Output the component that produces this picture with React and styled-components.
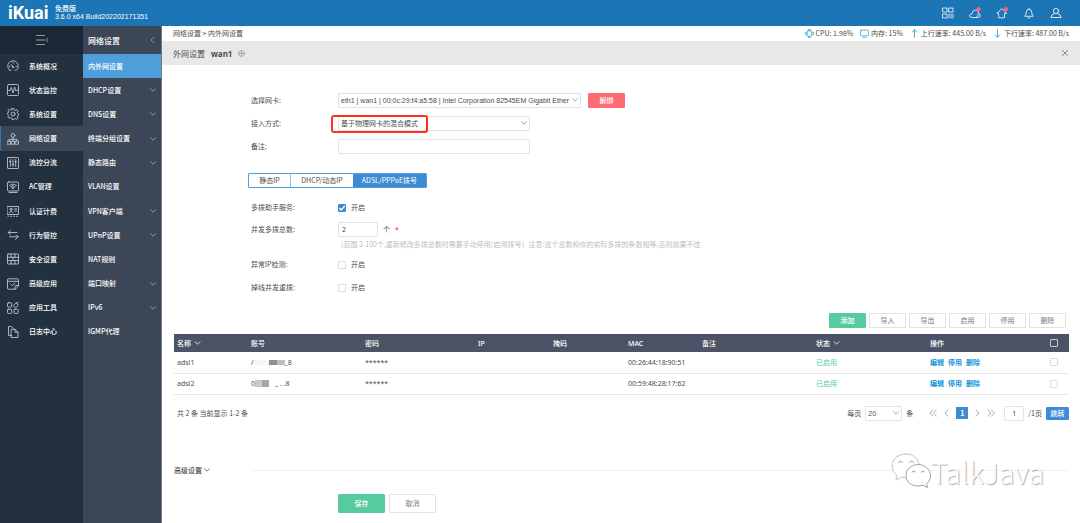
import React, { useState } from "react";
import styled, { createGlobalStyle } from "styled-components";

const GlobalStyle = createGlobalStyle`
  * {
    box-sizing: border-box;
  }

  body {
    margin: 0;
    background: #fff;
    color: #4c4c4c;
    font-family: "Noto Sans CJK SC", "Noto Sans", sans-serif;
    font-size: 7px;
    line-height: 15px;
  }

  button, input, select {
    font-family: inherit;
    font-size: 7px;
    line-height: 13px;
    color: inherit;
    margin: 0;
  }

  a {
    color: inherit;
    text-decoration: none;
  }

  svg {
    display: block;
    flex: none;
    fill: none;
    stroke: currentColor;
    stroke-linecap: round;
    stroke-linejoin: round;
  }
`;

const Page = styled.div`
  min-height: 100vh;
  display: flex;
  flex-direction: column;
`;

/* ---------- top bar ---------- */

const TopBar = styled.header`
  display: flex;
  align-items: center;
  height: 26px;
  padding: 0 18px 0 8px;
  background: #1c75b5;
  color: #fff;
`;

const Logo = styled.div`
  width: 47px;
  font-family: Roboto, sans-serif;
  font-size: 18px;
  font-weight: 700;
  line-height: 26px;
`;

const Version = styled.div`
  flex: 1;
  font-family: "Liberation Sans", "Noto Sans CJK SC", sans-serif;
  line-height: 8px;
  font-weight: 500;
`;

const TopIcons = styled.nav`
  display: flex;
  gap: 15px;
`;

const IconButton = styled.button`
  display: flex;
  align-items: center;
  padding: 0;
  border: none;
  background: none;
  color: ${(props) => props.$color || "inherit"};
  cursor: pointer;
`;

/* ---------- menus ---------- */

const Body = styled.div`
  flex: 1;
  display: flex;
`;

const SideMenu = styled.nav`
  width: 83px;
  flex: none;
  background: #223040;
  color: #fff;
`;

const SubMenu = styled.nav`
  width: 79px;
  flex: none;
  background: #3b4656;
  border-right: 1px solid #717b88;
  color: #fff;
`;

const MenuToggle = styled.div`
  display: flex;
  align-items: center;
  justify-content: center;
  height: 28px;
  background: #1b2734;
  color: #b9c0c8;
`;

const SubTitle = styled.div`
  display: flex;
  align-items: center;
  justify-content: space-between;
  height: 28px;
  padding: 0 6px 0 5px;
  font-size: 8px;
  font-weight: 500;

  svg {
    color: #a3abb5;
  }
`;

const MenuList = styled.div`
  display: grid;
  grid-template-rows: repeat(12, 1fr);
  min-height: 290px;
`;

const MenuItem = styled.a`
  display: flex;
  align-items: center;
  gap: 10px;
  padding-left: 6px;
  border-left: 1px solid ${(props) => (props.$active ? "#2a7ab8" : "transparent")};
  background: ${(props) => (props.$active ? "#3b4656" : "transparent")};
  font-weight: 500;

  svg {
    color: #cfd5db;
  }
`;

const SubItem = styled.a`
  display: flex;
  align-items: center;
  justify-content: space-between;
  padding: 0 5px;
  background: ${(props) => (props.$active ? "#4f9fda" : "transparent")};
  font-weight: 500;

  svg {
    color: #a3abb5;
  }
`;

/* ---------- content ---------- */

const Main = styled.main`
  flex: 1;
  min-width: 0;
`;

const CrumbBar = styled.div`
  display: flex;
  justify-content: space-between;
  padding: 0 11px;
  height: 15px;
`;

const Stats = styled.div`
  display: flex;
  gap: 7px;
`;

const Stat = styled.span`
  display: flex;
  align-items: center;
  gap: 2px;

  svg {
    color: #39a0dc;
  }
`;

const TitleBar = styled.div`
  display: flex;
  align-items: center;
  gap: 6px;
  height: 24px;
  padding: 0 11px;
  background: #e8e8e8;
  font-size: 8px;

  strong {
    font-family: "Noto Sans", sans-serif;
  }

  svg {
    color: #8a8a8a;
  }

  button {
    margin-left: auto;
  }
`;

const Form = styled.form`
  padding: 28px 11px 0 89px;
`;

const Rows = styled.div`
  display: flex;
  flex-direction: column;
  gap: ${(props) => props.$gap || 8}px;
`;

const Row = styled.div`
  display: flex;
  align-items: center;
  height: 15px;
`;

const Label = styled.label`
  width: 87px;
  flex: none;
`;

const TextInput = styled.input`
  width: ${(props) => props.$width}px;
  height: 15px;
  padding: 0 ${(props) => (props.$center ? 0 : 3)}px;
  border: 1px solid #e2e2e2;
  border-radius: 1px;
  background: #fff;
  font-family: "Noto Sans", sans-serif;
  text-align: ${(props) => (props.$center ? "center" : "left")};
`;

const SelectBox = styled.div`
  position: relative;
  width: ${(props) => props.$width}px;

  select {
    display: block;
    width: 100%;
    height: 15px;
    padding: 0 10px 0 2px;
    border: 1px solid #e2e2e2;
    border-radius: 1px;
    background: #fff;
    font-family: "Liberation Sans", "Noto Sans CJK SC", sans-serif;
    appearance: none;
  }

  > svg {
    position: absolute;
    top: 5px;
    right: 3px;
    color: #888;
    pointer-events: none;
  }
`;

const Highlight = styled.span`
  position: absolute;
  top: -1px;
  left: -7px;
  width: 97px;
  height: 18px;
  border: 2px solid #fa3416;
  border-radius: 3px;
  pointer-events: none;
`;

const colors = {
  red: ["#ff6b74", "#fff", "#ff6b74"],
  green: ["#57cba0", "#fff", "#57cba0"],
  blue: ["#3d8bd5", "#fff", "#3d8bd5"],
  plain: ["#fff", "#8b8f94", "#e2e2e2"],
};

const Button = styled.button`
  width: ${(props) => props.$width || 37}px;
  height: ${(props) => props.$height || 15}px;
  padding: 0;
  border: 1px solid ${(props) => colors[props.$kind || "plain"][2]};
  border-radius: 1px;
  background: ${(props) => colors[props.$kind || "plain"][0]};
  color: ${(props) => colors[props.$kind || "plain"][1]};
  font-weight: 500;
  line-height: 11px;
  cursor: pointer;
`;

const Tabs = styled.div`
  display: flex;
  width: max-content;
  margin: 19px 0 12px -3px;
  border: 1px solid #4f9fda;
  border-radius: 1px;
`;

const Tab = styled.button`
  width: ${(props) => props.$width}px;
  height: 13px;
  padding: 0;
  border: none;
  border-right: ${(props) => (props.$line ? "1px solid #8dbfe8" : "none")};
  background: ${(props) => (props.$active ? "#3d8bd5" : "#fff")};
  color: ${(props) => (props.$active ? "#fff" : "inherit")};
`;

const Check = styled.input.attrs({ type: "checkbox" })`
  appearance: none;
  display: block;
  width: 8px;
  height: 8px;
  border: 1px solid ${(props) => props.$line || "#dcdcdc"};
  border-radius: 1px;
  background: transparent;

  &:checked {
    border-color: #3d8bd5;
    background: #3d8bd5 url("data:image/svg+xml,%3Csvg xmlns='http://www.w3.org/2000/svg' viewBox='0 0 8 8'%3E%3Cpath d='M1.2 4l2 2L6.8 2' fill='none' stroke='white' stroke-width='1.4'/%3E%3C/svg%3E") center / 8px 8px;
  }
`;

const CheckLabel = styled.label`
  display: flex;
  align-items: center;
  gap: 5px;
`;

const Unit = styled.span`
  margin-left: ${(props) => props.$space || 5}px;
`;

const Required = styled.span`
  margin-left: 5px;
  color: #f5605f;
  font-family: "Noto Sans", sans-serif;
  font-weight: 700;
`;

const Hint = styled.p`
  margin: 0 0 6px 90px;
  color: #bdbdbd;
  line-height: 14px;
`;

const Section = styled.section`
  padding: 0 11px 0 12px;
`;

const Toolbar = styled.div`
  display: flex;
  justify-content: flex-end;
  gap: 3px;
  margin: 18px 3px 6px 0;
`;

const Table = styled.table`
  width: 100%;
  table-layout: fixed;
  border-collapse: collapse;
  font-family: "Noto Sans", "Noto Sans CJK SC", sans-serif;

  th, td {
    padding: 0 3px;
    text-align: left;
    white-space: nowrap;
  }

  th {
    height: 18px;
    background: #4d5366;
    color: #fff;
    font-weight: 500;
  }

  td {
    height: 21px;
    border-bottom: 1px solid #e8e8e8;
  }

  input {
    margin-left: 8px;
  }
`;

const Sortable = styled.span`
  display: flex;
  align-items: center;
  gap: 3px;
`;

const Masked = styled.span`
  display: flex;
  align-items: center;
  height: 8px;
`;

const Mosaic = styled.i`
  width: ${(props) => props.$width}px;
  height: ${(props) => props.$height || 5}px;
  background: ${(props) => props.$color};
`;

const Status = styled.span`
  color: #57cba0;
`;

const Actions = styled.span`
  display: flex;
  gap: 4px;
  color: #1296db;
  font-weight: 700;
`;

const Footer = styled.div`
  display: flex;
  align-items: center;
  justify-content: space-between;
  padding: 11px 0 0 3px;
`;

const Pager = styled.div`
  display: flex;
  align-items: center;
  gap: 4px;
`;

const PageButtons = styled.div`
  display: flex;
  align-items: center;
  gap: 7px;
  margin: 0 5px 0 12px;
`;

const Current = styled.button`
  width: 12px;
  height: 12px;
  padding: 0;
  border: none;
  background: #3d8bd5;
  color: #fff;
  font-weight: 700;
  line-height: 12px;
`;

const Advanced = styled.div`
  position: relative;
  display: flex;
  align-items: center;
  margin-top: 43px;
`;

const AdvancedButton = styled.button`
  display: flex;
  align-items: center;
  gap: 2px;
  width: 77px;
  padding: 0;
  border: none;
  background: none;
  font-weight: 500;
`;

const Line = styled.div`
  flex: 1;
  height: 1px;
  background: #f0f0f0;
`;

const Watermark = styled.div`
  position: absolute;
  top: -12px;
  right: 25px;
  display: flex;
  align-items: center;
  color: #fff;
  font-size: 29px;
  line-height: 38px;
  font-weight: 300;
  text-shadow: 1px 1px 1px #aaa;
`;

const FormButtons = styled.div`
  display: flex;
  gap: 4px;
  margin: 17px 0 8px 164px;
`;

/* ---------- icons ---------- */

const Svg = ({ size = 12, w = 1, children }) => (
  <svg width={size} height={size} viewBox="0 0 12 12" strokeWidth={w} aria-hidden="true">
    {children}
  </svg>
);

const Chevron = ({ size = 6, left, right, double }) => {
  if (left || right) {
    return (
      <svg
        width={double ? 8 : 5}
        height="8"
        viewBox={double ? "0 0 8 8" : "0 0 5 8"}
        strokeWidth="0.8"
        aria-hidden="true"
      >
        <path d={left ? "M4 .8L1 4l3 3.2" : "M1 .8L4 4 1 7.2"} />
        {double && <path d={left ? "M7.4.8l-3 3.2 3 3.2" : "M4.4.8l3 3.2-3 3.2"} />}
      </svg>
    );
  }
  return (
    <svg width={size} height="4" viewBox="0 0 6 4" strokeWidth="0.8" aria-hidden="true">
      <path d="M.5.7L3 3.2 5.500.7" />
    </svg>
  );
};

const menuIcons = {
  gauge: (
    <>
      <path d="M2.600 10.200A5.300 5.300 0 1 1 9.400 10.200H8M2.600 10.200H4" />
      <path d="M6 7L4.200 4.500M2.200 6.500h.8M9 6.500h.8M6 2.600v.6" />
      <circle cx="6" cy="7.200" r=".6" />
    </>
  ),
  pulse: (
    <>
      <rect x=".5" y=".5" width="11" height="11" rx="1" />
      <path d="M1 6.500h2L4.300 3.500l1.700 5.500 1.600-6 1.200 4 .6-.8H11" />
    </>
  ),
  gear: (
    <>
      <circle cx="6" cy="6" r="2" />
      <path d="M5 .6h2l.4 1.500 1 .4 1.400-.8 1.300 1.400-.8 1.400.4 1 1.100.4v1.400l-1.100.5-.4 1 .7 1.200-1.400 1.400-1.400-.8-1 .4L7 11.400H5l-.4-1.500-1-.4-1.400.8L.9 8.900l.7-1.200-.4-1L.3 6.200V5.100l1-.4.4-1-.8-1.200L2.300 1.300l1.300.8 1-.4z" />
    </>
  ),
  network: (
    <>
      <circle cx="6" cy="2.500" r="1.900" />
      <path d="M6 4.400v3.800M2 8.200V6.300h8v1.900" />
      <rect x=".5" y="8.200" width="3" height="3" />
      <rect x="4.500" y="8.200" width="3" height="3" />
      <rect x="8.500" y="8.200" width="3" height="3" />
    </>
  ),
  sliders: (
    <>
      <rect x=".5" y=".5" width="11" height="11" rx=".6" />
      <path d="M3.300 2.500v7M6 2.500v7M8.700 2.500v7M2.400 4.500h1.800M5.100 7.500h1.800M7.800 5h1.800" />
    </>
  ),
  ac: (
    <>
      <rect x=".5" y="1" width="11" height="9" rx="1" />
      <path d="M2.500 4.500Q6 1.500 9.500 4.500M3.600 5.700Q6 3.500 8.400 5.700M5 7l1 1 1-1-1-.6zM2 11.500h8" />
    </>
  ),
  card: (
    <>
      <rect x=".5" y="1.500" width="11" height="8" />
      <circle cx="4" cy="4.300" r="1.100" />
      <path d="M2 7.800q2-3 4 0M7.500 4h2.300M7.500 6h2.300M1 11.300h.5M3.500 11.300h1M6.500 11.300h1M9.500 11.300h1" />
    </>
  ),
  arrows: <path d="M10 3.500H1.300L3.700 1M1.300 3.500l2 2M2.500 7.800h8.700l-2-2M11.200 7.800L8.500 10.500" />,
  wall: (
    <>
      <rect x=".5" y="1" width="11" height="10" rx=".6" />
      <path d="M.5 4.300h11M.5 7.600h11M4 1v3.300M8 1v3.300M6 4.300v3.300M4 7.600V11M8 7.600V11" />
    </>
  ),
  note: (
    <>
      <path d="M11.500 7.500V1.800Q11.500.8 10.500.8h-9q-1 0-1 1v8.400q0 1 1 1H8zM8 11.200V8.500q0-1 1-1h2.500" />
      <path d="M.5 3.300h11M3.700 6l1.700 1.800L8 5" />
    </>
  ),
  apps: (
    <>
      <rect x=".5" y=".8" width="4.200" height="4.200" rx=".8" />
      <rect x=".5" y="7.200" width="4.200" height="4.200" rx=".8" />
      <rect x="7" y="7.200" width="4.200" height="4.200" rx=".8" />
      <path d="M6.600 3.500L9 .8l2.400 2.500L9 5.500zM9.500 1l1.700-.5" />
    </>
  ),
  log: <path d="M4.500 9.500H1.500v-9h3l2 2M4.500 3.300h3.500l3 3v5.200H4.500zM8 3.300v3h3" />,
};

const menu = [
  ["gauge", "系统概况"],
  ["pulse", "状态监控"],
  ["gear", "系统设置"],
  ["network", "网络设置"],
  ["sliders", "流控分流"],
  ["ac", "AC管理"],
  ["card", "认证计费"],
  ["arrows", "行为管控"],
  ["wall", "安全设置"],
  ["note", "高级应用"],
  ["apps", "应用工具"],
  ["log", "日志中心"],
];

const subMenu = [
  ["内外网设置", false],
  ["DHCP设置", true],
  ["DNS设置", true],
  ["终端分组设置", true],
  ["静态路由", true],
  ["VLAN设置", false],
  ["VPN客户端", true],
  ["UPnP设置", true],
  ["NAT规则", false],
  ["端口映射", true],
  ["IPv6", true],
  ["IGMP代理", false],
];

const tabs = [
  ["静态IP", 42],
  ["DHCP/动态IP", 62],
  ["ADSL/PPPoE拨号", 73],
];

const columnWidths = [74, 114, 113, 75, 75, 74, 114, 114, 112, 30];

const lines = [
  {
    name: "adsl1",
    mac: "00:26:44:18:90:51",
    account: (
      <>
        /<Mosaic $width={15} $color="#f6f6f6" />
        <Mosaic $width={8} $color="#8f8f8f" />
        <Mosaic $width={8} $color="#bdbdbd" />_8
      </>
    ),
  },
  {
    name: "adsl2",
    mac: "00:59:48:28:17:62",
    account: (
      <>
        0<Mosaic $width={7} $height={7} $color="#c9c9c9" />
        <Mosaic $width={7} $height={7} $color="#a6a6a6" />
        <Mosaic $width={6} $color="#fff" />_ . .8
      </>
    ),
  },
];

const WeChat = () => (
  <svg width="40" height="36" viewBox="0 0 40 36" strokeWidth="1" aria-hidden="true">
    <path
      d="M15 1C7 1 1 6 1 13c0 4 2 7 5 9.500L5 27l5.500-3q3 1 6 .5C29 24 29 15 28 11 26 4 21 1 15 1z"
      fill="#fff"
      stroke="#c4c4c4"
    />
    <path d="M7.500 9.500q2-3 4 0M18.500 9.500q2-3 4 0" stroke="#999" />
    <path
      d="M27 11.500c-7 0-12 5-12 11s5 10.500 12 10.500q3 0 5-.8l4.500 2.300-1-3.700c2.500-2 4-5 4-8.300 0-6-5.500-11-12.500-11z"
      fill="#fff"
      stroke="#a0a0a0"
    />
    <path d="M21 19q1.700-2.600 3.400 0M30 19q1.700-2.600 3.400 0" stroke="#999" />
  </svg>
);

const TopBarSection = () => (
  <TopBar>
    <Logo>iKuai</Logo>
    <Version>
      免费版
      <br />
      3.6.0 x64 Build202202171351
    </Version>
    <TopIcons>
      <IconButton aria-label="应用">
        <Svg w={0.8}>
          <rect x="1" y="1" width="4" height="4" />
          <rect x="7" y="1" width="4" height="4" />
          <rect x="1" y="7" width="4" height="4" />
          <path d="M7 7v4M9 7v4M11 7v4" />
        </Svg>
      </IconButton>
      <IconButton aria-label="云服务">
        <Svg w={0.8}>
          <path d="M3 10.500Q.5 10.500.7 8.500 1 6.800 3 6.800 3.500 3 6.500 3q2.800.2 3.200 3.300 1.800.8 1.600 2.500-.3 1.700-2 1.700zM7.500 10Q9.500 9 9.300 6.800" />
          <circle cx="9.500" cy="2.300" r="2.200" fill="#fa6470" stroke="none" />
        </Svg>
      </IconButton>
      <IconButton aria-label="升级">
        <Svg w={0.8}>
          <path d="M5.500 2L.8 6.300h1.900v4.500h5.800V6.300h1.900z" />
          <circle cx="9.800" cy="2.300" r="2.200" fill="#fa6470" stroke="none" />
        </Svg>
      </IconButton>
      <IconButton aria-label="通知">
        <Svg w={0.8}>
          <path d="M2 9Q3.300 7.500 3.300 5 3.500 2.500 6 2.300 8.500 2.500 8.700 5q0 2.500 1.300 4zM5 11h2M6 1.300v1" />
        </Svg>
      </IconButton>
      <IconButton aria-label="用户">
        <Svg w={0.8}>
          <circle cx="6" cy="4" r="2.600" />
          <path d="M4.500 6.300Q1.200 7.200 1 10.500h10Q10.800 7.200 7.500 6.300" />
        </Svg>
      </IconButton>
    </TopIcons>
  </TopBar>
);

const StatsSection = () => (
  <Stats>
    <Stat>
      <Svg size={9}>
        <rect x="3" y="2.500" width="6" height="7" rx="1" />
        <path d="M4.500 2V.6h3V2M4.500 10v1.400h3V10M2.500 4.500H.6v3h1.900M9.500 4.500h1.900v3H9.500" />
      </Svg>
      CPU: 1.98%
    </Stat>
    <Stat>
      <Svg size={9}>
        <rect x=".6" y="1.500" width="10.800" height="7.500" rx="1" />
        <path d="M3.500 11h5" />
      </Svg>
      内存: 15%
    </Stat>
    <Stat>
      <Svg size={9} w={1.2}>
        <path d="M6 11V1M3 4l3-3 3 3" />
      </Svg>
      上行速率: 445.00 B/s
    </Stat>
    <Stat>
      <Svg size={9} w={1.2}>
        <path d="M6 1v10M3 8l3 3 3-3" />
      </Svg>
      下行速率: 487.00 B/s
    </Stat>
  </Stats>
);

const App = () => {
  const [tab, setTab] = useState(2);

  return (
    <Page>
      <GlobalStyle />
      <TopBarSection />
      <Body>
        <SideMenu>
          <MenuToggle>
            <svg width="12" height="10" viewBox="0 0 12 10" strokeWidth="0.8" aria-hidden="true">
              <path d="M.5.500h8M.5 5h8M.5 9.500h8M11.500 3.500L10 5l1.500 1.500" />
            </svg>
          </MenuToggle>
          <MenuList>
            {menu.map(([icon, text], index) => (
              <MenuItem key={text} href="#" $active={index === 3}>
                <Svg w={0.8}>{menuIcons[icon]}</Svg>
                {text}
              </MenuItem>
            ))}
          </MenuList>
        </SideMenu>
        <SubMenu>
          <SubTitle>
            网络设置
            <Chevron left />
          </SubTitle>
          <MenuList>
            {subMenu.map(([text, open], index) => (
              <SubItem key={text} href="#" $active={index === 0}>
                {text}
                {open && <Chevron />}
              </SubItem>
            ))}
          </MenuList>
        </SubMenu>
        <Main>
          <CrumbBar>
            <span>网络设置 &gt; 内外网设置</span>
            <StatsSection />
          </CrumbBar>
          <TitleBar>
            外网设置 <strong>wan1</strong>
            <Svg size={7}>
              <circle cx="6" cy="6" r="5" />
              <path d="M1 6h10M6 1v10" />
            </Svg>
            <IconButton aria-label="关闭">
              <Svg size={8} w={1.5}>
                <path d="M2 2l8 8M10 2l-8 8" />
              </Svg>
            </IconButton>
          </TitleBar>

          <Form>
            <Rows>
              <Row>
                <Label htmlFor="nic">选择网卡:</Label>
                <SelectBox $width={243}>
                  <select id="nic">
                    <option>eth1 | wan1 | 00:0c:29:f4:a5:58 | Intel Corporation 82545EM Gigabit Ether</option>
                  </select>
                  <Chevron />
                </SelectBox>
                <Unit $space={7}>
                  <Button type="button" $kind="red">解绑</Button>
                </Unit>
              </Row>
              <Row>
                <Label htmlFor="mode">接入方式:</Label>
                <SelectBox $width={192}>
                  <select id="mode">
                    <option>基于物理网卡的混合模式</option>
                  </select>
                  <Chevron />
                  <Highlight />
                </SelectBox>
              </Row>
              <Row>
                <Label htmlFor="note">备注:</Label>
                <TextInput id="note" $width={192} />
              </Row>
            </Rows>

            <Tabs>
              {tabs.map(([text, width], index) => (
                <Tab
                  key={text}
                  type="button"
                  $width={width}
                  $line={index === 0}
                  $active={tab === index}
                  onClick={() => setTab(index)}
                >
                  {text}
                </Tab>
              ))}
            </Tabs>

            <Rows $gap={7}>
              <Row>
                <Label htmlFor="helper">多拨助手服务:</Label>
                <CheckLabel>
                  <Check id="helper" defaultChecked />
                  开启
                </CheckLabel>
              </Row>
              <Row>
                <Label htmlFor="total">并发多拨总数:</Label>
                <TextInput id="total" $width={40} defaultValue="2" />
                <Unit>个</Unit>
                <Required>*</Required>
              </Row>
            </Rows>
            <Hint>(范围 2-100个,重新修改多拨总数时需要手动停用/启用拨号）注意:这个总数和你的实际多拨的条数相等,否则效果不佳</Hint>
            <Rows>
              <Row>
                <Label htmlFor="detect">异常IP检测:</Label>
                <CheckLabel>
                  <Check id="detect" />
                  开启
                </CheckLabel>
              </Row>
              <Row>
                <Label htmlFor="redial">掉线并发重拨:</Label>
                <CheckLabel>
                  <Check id="redial" />
                  开启
                </CheckLabel>
              </Row>
            </Rows>
          </Form>

          <Section>
            <Toolbar>
              <Button $kind="green">添加</Button>
              <Button>导入</Button>
              <Button>导出</Button>
              <Button>启用</Button>
              <Button>停用</Button>
              <Button>删除</Button>
            </Toolbar>
            <Table>
              <colgroup>
                {columnWidths.map((width, index) => (
                  <col key={index} width={width} />
                ))}
              </colgroup>
              <thead>
                <tr>
                  <th><Sortable>名称 <Chevron size={7} /></Sortable></th>
                  <th>账号</th>
                  <th>密码</th>
                  <th>IP</th>
                  <th>掩码</th>
                  <th>MAC</th>
                  <th>备注</th>
                  <th><Sortable>状态 <Chevron size={7} /></Sortable></th>
                  <th>操作</th>
                  <th><Check aria-label="全选" $line="#c6c9d0" /></th>
                </tr>
              </thead>
              <tbody>
                {lines.map((line) => (
                  <tr key={line.name}>
                    <td>{line.name}</td>
                    <td><Masked>{line.account}</Masked></td>
                    <td>******</td>
                    <td />
                    <td />
                    <td>{line.mac}</td>
                    <td />
                    <td><Status>已启用</Status></td>
                    <td>
                      <Actions>
                        <a href="#">编辑</a>
                        <a href="#">停用</a>
                        <a href="#">删除</a>
                      </Actions>
                    </td>
                    <td><Check aria-label={line.name} /></td>
                  </tr>
                ))}
              </tbody>
            </Table>

            <Footer>
              <span>共 2 条 当前显示 1-2 条</span>
              <Pager>
                <label htmlFor="size">每页</label>
                <SelectBox $width={37}>
                  <select id="size">
                    <option>20</option>
                  </select>
                  <Chevron />
                </SelectBox>
                条
                <PageButtons>
                  <IconButton aria-label="首页" $color="#999"><Chevron left double /></IconButton>
                  <IconButton aria-label="上一页" $color="#999"><Chevron left /></IconButton>
                  <Current>1</Current>
                  <IconButton aria-label="下一页" $color="#999"><Chevron right /></IconButton>
                  <IconButton aria-label="末页" $color="#999"><Chevron right double /></IconButton>
                </PageButtons>
                <TextInput aria-label="页码" $width={20} $center defaultValue="1" />
                <span>/1页</span>
                <Button $kind="blue" $width={23} $height={13}>跳转</Button>
              </Pager>
            </Footer>

            <Advanced>
              <AdvancedButton>
                高级设置 <Chevron />
              </AdvancedButton>
              <Line />
              <Watermark>
                <WeChat />
                TalkJava
              </Watermark>
            </Advanced>

            <FormButtons>
              <Button $kind="green" $width={47} $height={19}>保存</Button>
              <Button $width={47} $height={19}>取消</Button>
            </FormButtons>
          </Section>
        </Main>
      </Body>
    </Page>
  );
};

export default App;
